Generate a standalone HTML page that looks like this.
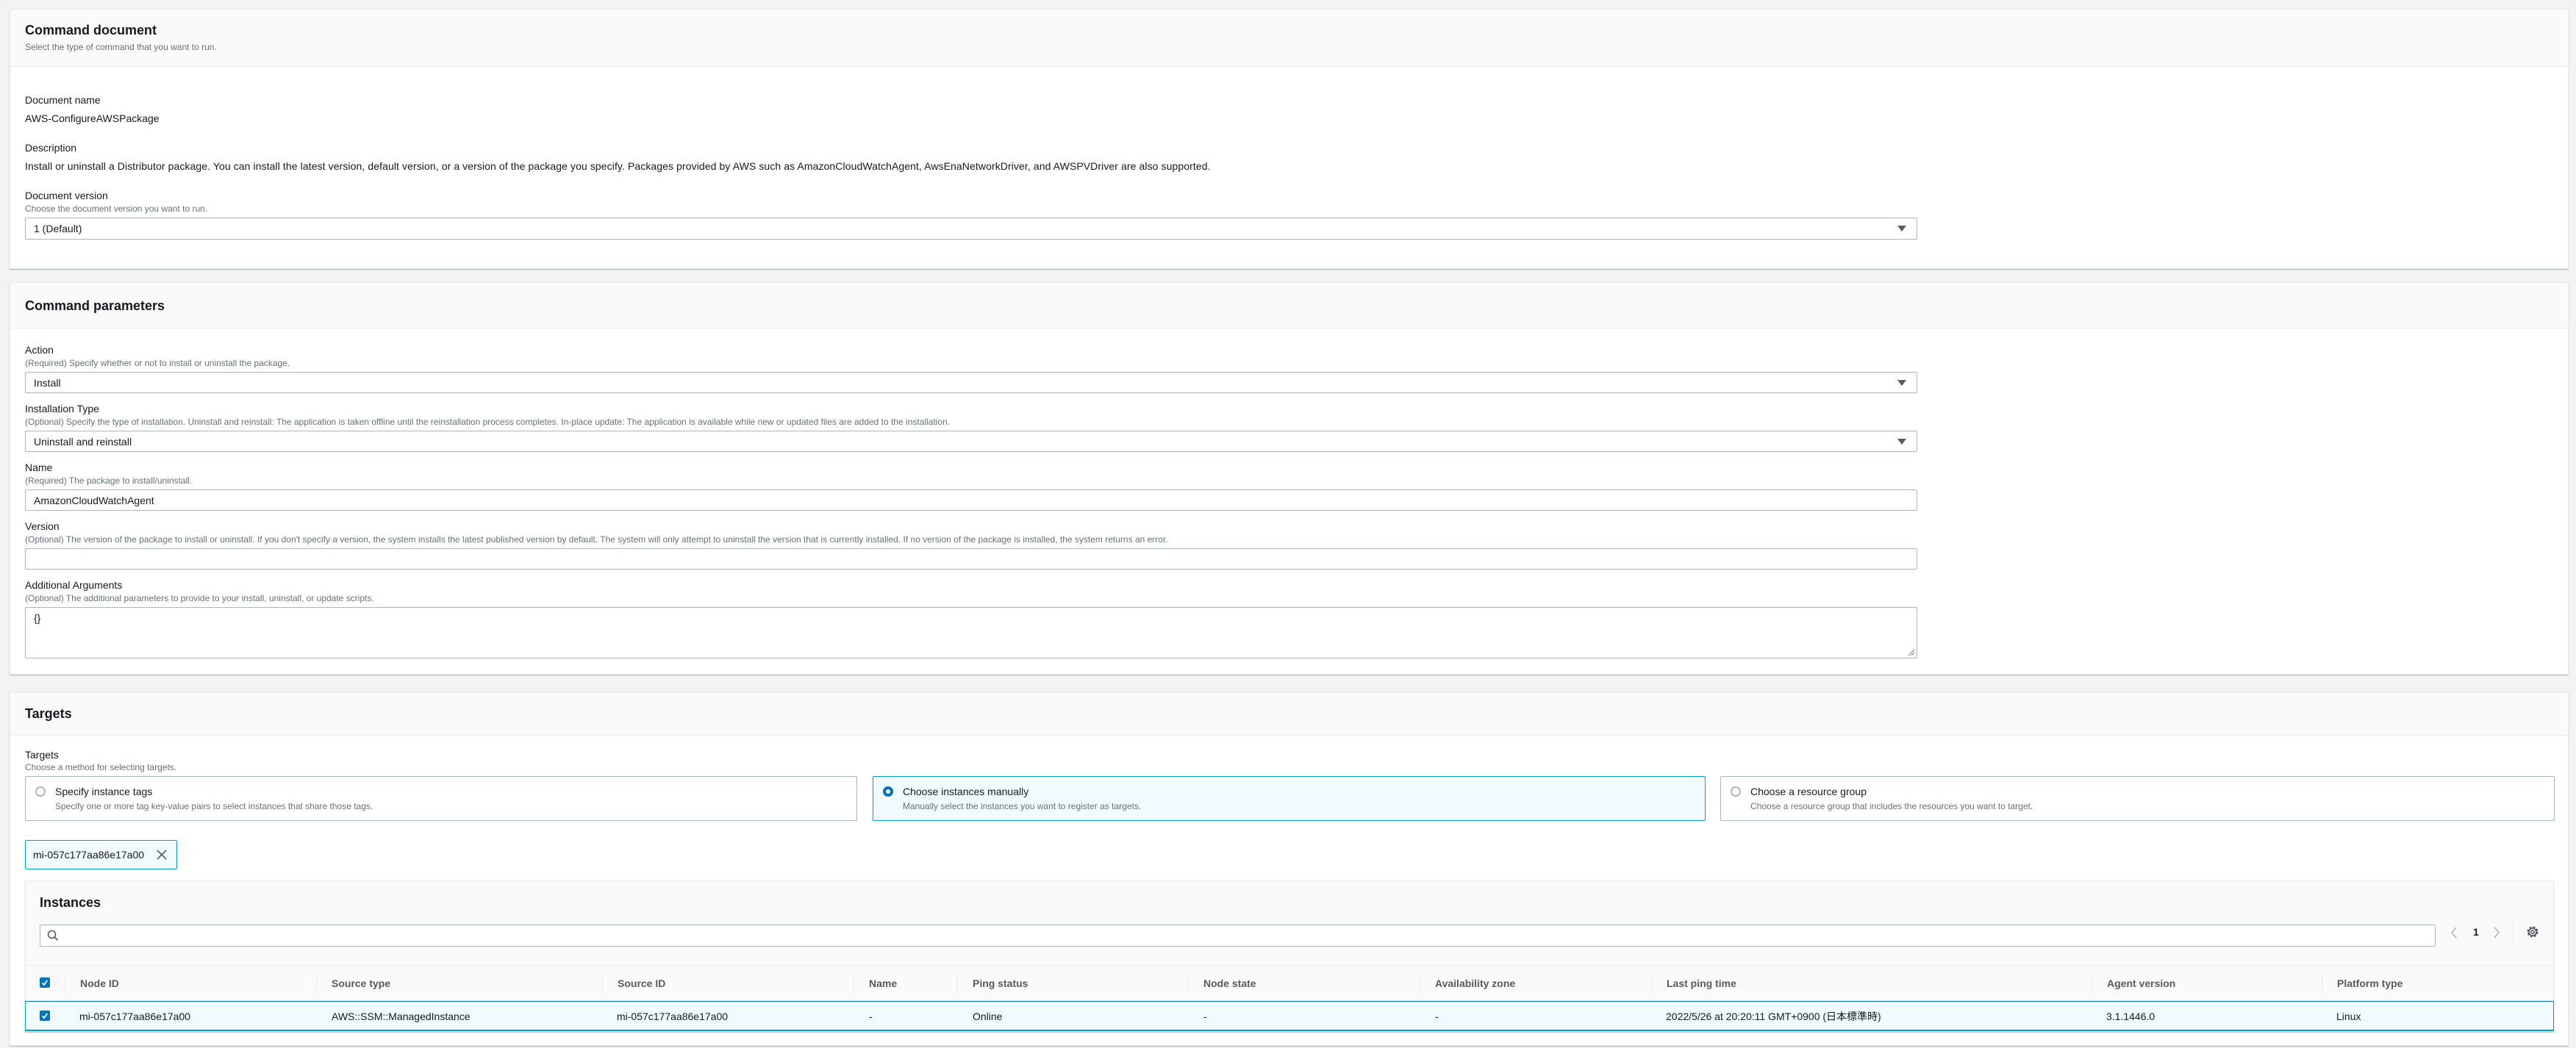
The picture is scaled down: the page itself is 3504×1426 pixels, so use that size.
<!DOCTYPE html>
<html><head><meta charset="utf-8">
<style>
*{box-sizing:border-box;margin:0;padding:0}
body{width:3504px;height:1426px;background:#f2f3f3;font-family:"Liberation Sans","Noto Sans CJK JP",sans-serif;color:#16191f;position:relative;overflow:hidden;font-size:14px}
.a{position:absolute;white-space:nowrap}
.panel{position:absolute;background:#fff;border:1px solid #eaeded;box-shadow:0 1px 1px rgba(0,28,36,.3)}
.hdr{position:absolute;left:0;right:0;top:0;background:#fafafa;border-bottom:1px solid #eaeded}
.h2{font-size:18px;font-weight:bold}
.lbl{font-size:14px;line-height:16px}
.hint{font-size:12px;color:#687078;line-height:14px}
.inp{position:absolute;background:#fff;border:1px solid #aab7b8;border-radius:2px;font-size:14px;padding-left:11px;display:flex;align-items:center}
.arr{position:absolute;right:14px;top:50%;margin-top:-4px;width:0;height:0;border-left:6px solid transparent;border-right:6px solid transparent;border-top:8px solid #545b64}
.tile{position:absolute;border:1px solid #aab7b8;border-radius:2px;background:#fff;top:1056px;height:61px}
.tile.sel{border-color:#00a1c9;background:#f1faff}
.radio{position:absolute;left:13px;top:13px;width:14px;height:14px;border-radius:50%;border:2px solid #aab7b8;background:#fff}
.tile.sel .radio{border:4px solid #0073bb}
.tt{position:absolute;left:40px;top:12px;font-size:14px}
.td{position:absolute;left:40px;top:33px;font-size:12px;color:#687078}
.cb{position:absolute;width:14px;height:14px;background:#0073bb;border-radius:2px}
.cb svg{position:absolute;left:1px;top:1px}
.th{position:absolute;top:1330px;font-size:14px;font-weight:bold;color:#545b64;line-height:16px}
.dv{position:absolute;top:1325px;height:26px;border-left:1px solid #eaeded}
.tr{position:absolute;top:1375px;font-size:14px;line-height:16px}
</style></head><body>

<div class="panel" style="left:13px;top:12px;width:3481px;height:354px">
  <div class="hdr" style="height:78px"></div>
</div>
<div class="a h2" style="left:34px;top:31px">Command document</div>
<div class="a hint" style="left:34px;top:57px">Select the type of command that you want to run.</div>
<div class="a lbl" style="left:34px;top:128px">Document name</div>
<div class="a lbl" style="left:34px;top:153px">AWS-ConfigureAWSPackage</div>
<div class="a lbl" style="left:34px;top:193px">Description</div>
<div class="a lbl" style="left:34px;top:218px;letter-spacing:0.09px">Install or uninstall a Distributor package. You can install the latest version, default version, or a version of the package you specify. Packages provided by AWS such as AmazonCloudWatchAgent, AwsEnaNetworkDriver, and AWSPVDriver are also supported.</div>
<div class="a lbl" style="left:34px;top:258px">Document version</div>
<div class="a hint" style="left:34px;top:277px">Choose the document version you want to run.</div>
<div class="inp" style="left:34px;top:296px;width:2574px;height:30px">1 (Default)<span class="arr"></span></div>

<div class="panel" style="left:13px;top:384px;width:3481px;height:534px">
  <div class="hdr" style="height:62px"></div>
</div>
<div class="a h2" style="left:34px;top:406px">Command parameters</div>
<div class="a lbl" style="left:34px;top:468px">Action</div>
<div class="a hint" style="left:34px;top:487px">(Required) Specify whether or not to install or uninstall the package.</div>
<div class="inp" style="left:34px;top:506px;width:2574px;height:29px">Install<span class="arr"></span></div>
<div class="a lbl" style="left:34px;top:548px">Installation Type</div>
<div class="a hint" style="left:34px;top:567px">(Optional) Specify the type of installation. Uninstall and reinstall: The application is taken offline until the reinstallation process completes. In-place update: The application is available while new or updated files are added to the installation.</div>
<div class="inp" style="left:34px;top:586px;width:2574px;height:29px">Uninstall and reinstall<span class="arr"></span></div>
<div class="a lbl" style="left:34px;top:628px">Name</div>
<div class="a hint" style="left:34px;top:647px">(Required) The package to install/uninstall.</div>
<div class="inp" style="left:34px;top:666px;width:2574px;height:29px">AmazonCloudWatchAgent</div>
<div class="a lbl" style="left:34px;top:708px">Version</div>
<div class="a hint" style="left:34px;top:727px">(Optional) The version of the package to install or uninstall. If you don't specify a version, the system installs the latest published version by default. The system will only attempt to uninstall the version that is currently installed. If no version of the package is installed, the system returns an error.</div>
<div class="inp" style="left:34px;top:746px;width:2574px;height:29px"></div>
<div class="a lbl" style="left:34px;top:788px">Additional Arguments</div>
<div class="a hint" style="left:34px;top:807px">(Optional) The additional parameters to provide to your install, uninstall, or update scripts.</div>
<div class="inp" style="left:34px;top:826px;width:2574px;height:70px;align-items:flex-start;padding-top:6px">{}
<svg style="position:absolute;right:2px;bottom:2px" width="10" height="10"><path d="M1 9L9 1M5 9L9 5" stroke="#687078" stroke-width="1"/></svg></div>

<div class="panel" style="left:13px;top:942px;width:3481px;height:481px">
  <div class="hdr" style="height:58px"></div>
</div>
<div class="a h2" style="left:34px;top:961px">Targets</div>
<div class="a lbl" style="left:34px;top:1019px">Targets</div>
<div class="a hint" style="left:34px;top:1037px">Choose a method for selecting targets.</div>
<div class="tile" style="left:34px;width:1132px"><span class="radio"></span><span class="tt">Specify instance tags</span><span class="td">Specify one or more tag key-value pairs to select instances that share those tags.</span></div>
<div class="tile sel" style="left:1187px;width:1133px"><span class="radio"></span><span class="tt">Choose instances manually</span><span class="td">Manually select the instances you want to register as targets.</span></div>
<div class="tile" style="left:2340px;width:1135px"><span class="radio"></span><span class="tt">Choose a resource group</span><span class="td">Choose a resource group that includes the resources you want to target.</span></div>

<div class="a" style="left:34px;top:1143px;width:207px;height:40px;background:#f1faff;border:1px solid #00a1c9;border-radius:2px"></div>
<div class="a" style="left:45px;top:1155px;font-size:14px">mi-057c177aa86e17a00</div>
<svg class="a" style="left:213px;top:1156px" width="14" height="14"><path d="M1 1L13 13M13 1L1 13" stroke="#545b64" stroke-width="1.6"/></svg>

<div class="a" style="left:34px;top:1198px;width:3440px;height:206px;background:#fafafa;border:1px solid #eaeded;box-shadow:0 1px 1px rgba(0,28,36,.3)"></div>
<div class="a h2" style="left:54px;top:1218px">Instances</div>
<div class="a" style="left:54px;top:1258px;width:3259px;height:30px;background:#fff;border:1px solid #aab7b8;border-radius:2px"></div>
<svg class="a" style="left:64px;top:1265px" width="16" height="16"><circle cx="6.5" cy="6.5" r="5" fill="none" stroke="#545b64" stroke-width="1.6"/><path d="M10 10L14.5 14.5" stroke="#545b64" stroke-width="1.8"/></svg>
<svg class="a" style="left:3332px;top:1260px" width="12" height="18"><path d="M9 2L3 9L9 16" fill="none" stroke="#aab7b8" stroke-width="1.6"/></svg>
<div class="a" style="left:3364px;top:1260px;font-size:14px;font-weight:bold">1</div>
<svg class="a" style="left:3390px;top:1260px" width="12" height="18"><path d="M3 2L9 9L3 16" fill="none" stroke="#aab7b8" stroke-width="1.6"/></svg>
<div class="a" style="left:3418px;top:1253px;height:30px;border-left:1px solid #eaeded"></div>
<svg class="a" style="left:3436px;top:1259px" width="18" height="18" viewBox="0 0 18 18"><circle cx="9" cy="9" r="6.3" fill="none" stroke="#545b64" stroke-width="2.4" stroke-dasharray="3 2"/><circle cx="9" cy="9" r="5" fill="none" stroke="#545b64" stroke-width="1.6"/><circle cx="9" cy="9" r="2.2" fill="none" stroke="#545b64" stroke-width="1.6"/></svg>

<div class="a" style="left:35px;top:1313px;width:3438px;border-top:1px solid #eaeded"></div>
<div class="cb" style="left:54px;top:1330px"><svg width="12" height="12"><path d="M2.5 6.5L5 9L9.5 3" fill="none" stroke="#fff" stroke-width="1.8"/></svg></div>
<div class="dv" style="left:88px"></div>
<div class="dv" style="left:430px"></div>
<div class="dv" style="left:819px"></div>
<div class="dv" style="left:1161px"></div>
<div class="dv" style="left:1302px"></div>
<div class="dv" style="left:1616px"></div>
<div class="dv" style="left:1931px"></div>
<div class="dv" style="left:2246px"></div>
<div class="dv" style="left:2845px"></div>
<div class="dv" style="left:3158px"></div>
<div class="th" style="left:109px">Node ID</div>
<div class="th" style="left:451px">Source type</div>
<div class="th" style="left:840px">Source ID</div>
<div class="th" style="left:1182px">Name</div>
<div class="th" style="left:1323px">Ping status</div>
<div class="th" style="left:1637px">Node state</div>
<div class="th" style="left:1952px">Availability zone</div>
<div class="th" style="left:2267px">Last ping time</div>
<div class="th" style="left:2866px">Agent version</div>
<div class="th" style="left:3179px">Platform type</div>

<div class="a" style="left:34px;top:1362px;width:3440px;height:41px;background:#f1faff;border-top:1px solid #0073bb;border-bottom:2px solid #00a1c9;border-left:1px solid #00a1c9;border-right:1px solid #00a1c9"></div>
<div class="cb" style="left:54px;top:1375px"><svg width="12" height="12"><path d="M2.5 6.5L5 9L9.5 3" fill="none" stroke="#fff" stroke-width="1.8"/></svg></div>
<div class="tr" style="left:108px">mi-057c177aa86e17a00</div>
<div class="tr" style="left:451px">AWS::SSM::ManagedInstance</div>
<div class="tr" style="left:839px">mi-057c177aa86e17a00</div>
<div class="tr" style="left:1182px">-</div>
<div class="tr" style="left:1323px">Online</div>
<div class="tr" style="left:1637px">-</div>
<div class="tr" style="left:1952px">-</div>
<div class="tr" style="left:2266px">2022/5/26 at 20:20:11 GMT+0900 (日本標準時)</div>
<div class="tr" style="left:2865px">3.1.1446.0</div>
<div class="tr" style="left:3178px">Linux</div>
</body></html>
